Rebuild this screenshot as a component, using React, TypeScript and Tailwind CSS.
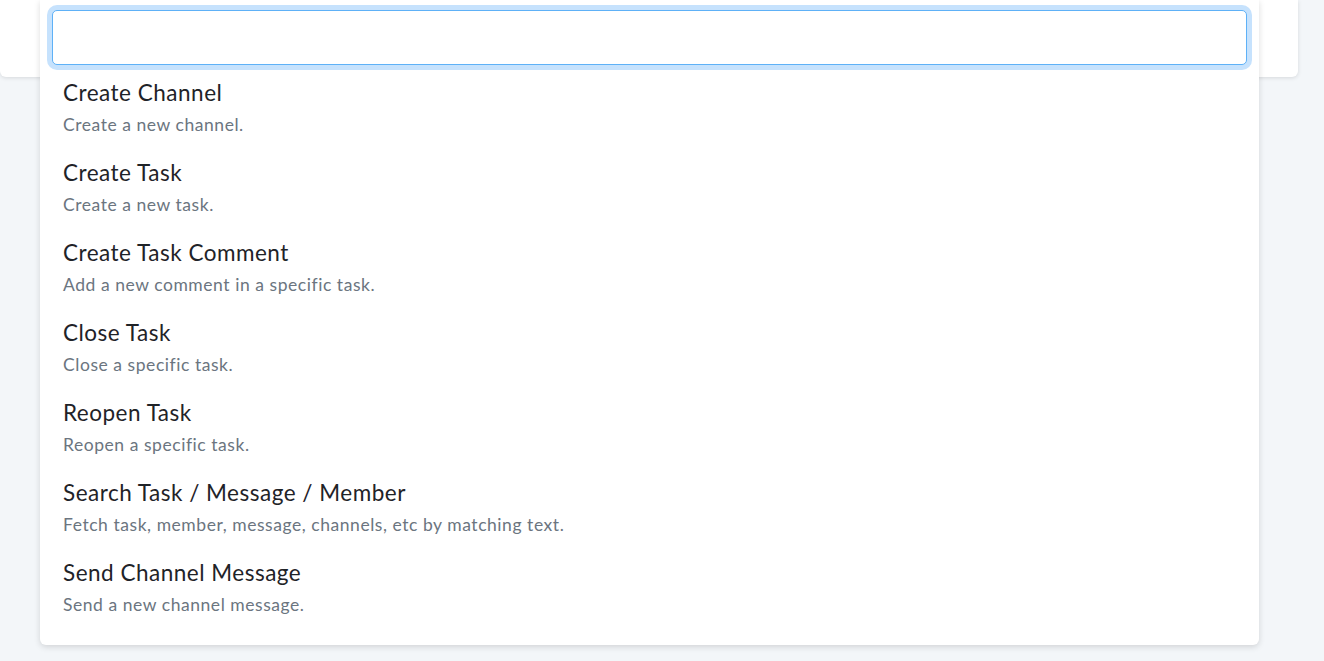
import React from "react";

const actions = [
  { title: "Create Channel", desc: "Create a new channel." },
  { title: "Create Task", desc: "Create a new task." },
  { title: "Create Task Comment", desc: "Add a new comment in a specific task." },
  { title: "Close Task", desc: "Close a specific task." },
  { title: "Reopen Task", desc: "Reopen a specific task." },
  { title: "Search Task / Message / Member", desc: "Fetch task, member, message, channels, etc by matching text." },
  { title: "Send Channel Message", desc: "Send a new channel message." },
];

export default function App() {
  return (
    <div
      className="relative h-[661px] w-[1324px] overflow-hidden bg-[#f3f6f9]"
      style={{ fontFamily: "Lato, 'Noto Sans', sans-serif" }}
    >
      {/* card sitting underneath the popover */}
      <div className="h-[77px] w-[1298px] rounded-b-md bg-white shadow-[0_1px_4px_rgba(0,0,0,0.12)]" />

      {/* action picker popover */}
      <div className="absolute left-[40px] top-0 w-[1219px] rounded-b-md bg-white px-3 pt-[10px] pb-[7px] shadow-[0_2px_6px_rgba(0,0,0,0.14)]">
        <input
          className="block h-[55px] w-full rounded-[5px] border border-[#5eb1f7] bg-white outline-none ring-[5px] ring-[#c6e2fd]"
          type="text"
        />
        <ul className="mt-[13px] flex flex-col">
          {actions.map((a) => (
            <li key={a.title} className="h-[80px] px-[11px]">
              <div className="text-[22.5px] leading-[30px] tracking-[0.5px] text-[#1f2328]">{a.title}</div>
              <div className="mt-[5px] text-[17.5px] leading-[24px] tracking-[0.55px] text-[#6b7580]">{a.desc}</div>
            </li>
          ))}
        </ul>
      </div>
    </div>
  );
}
